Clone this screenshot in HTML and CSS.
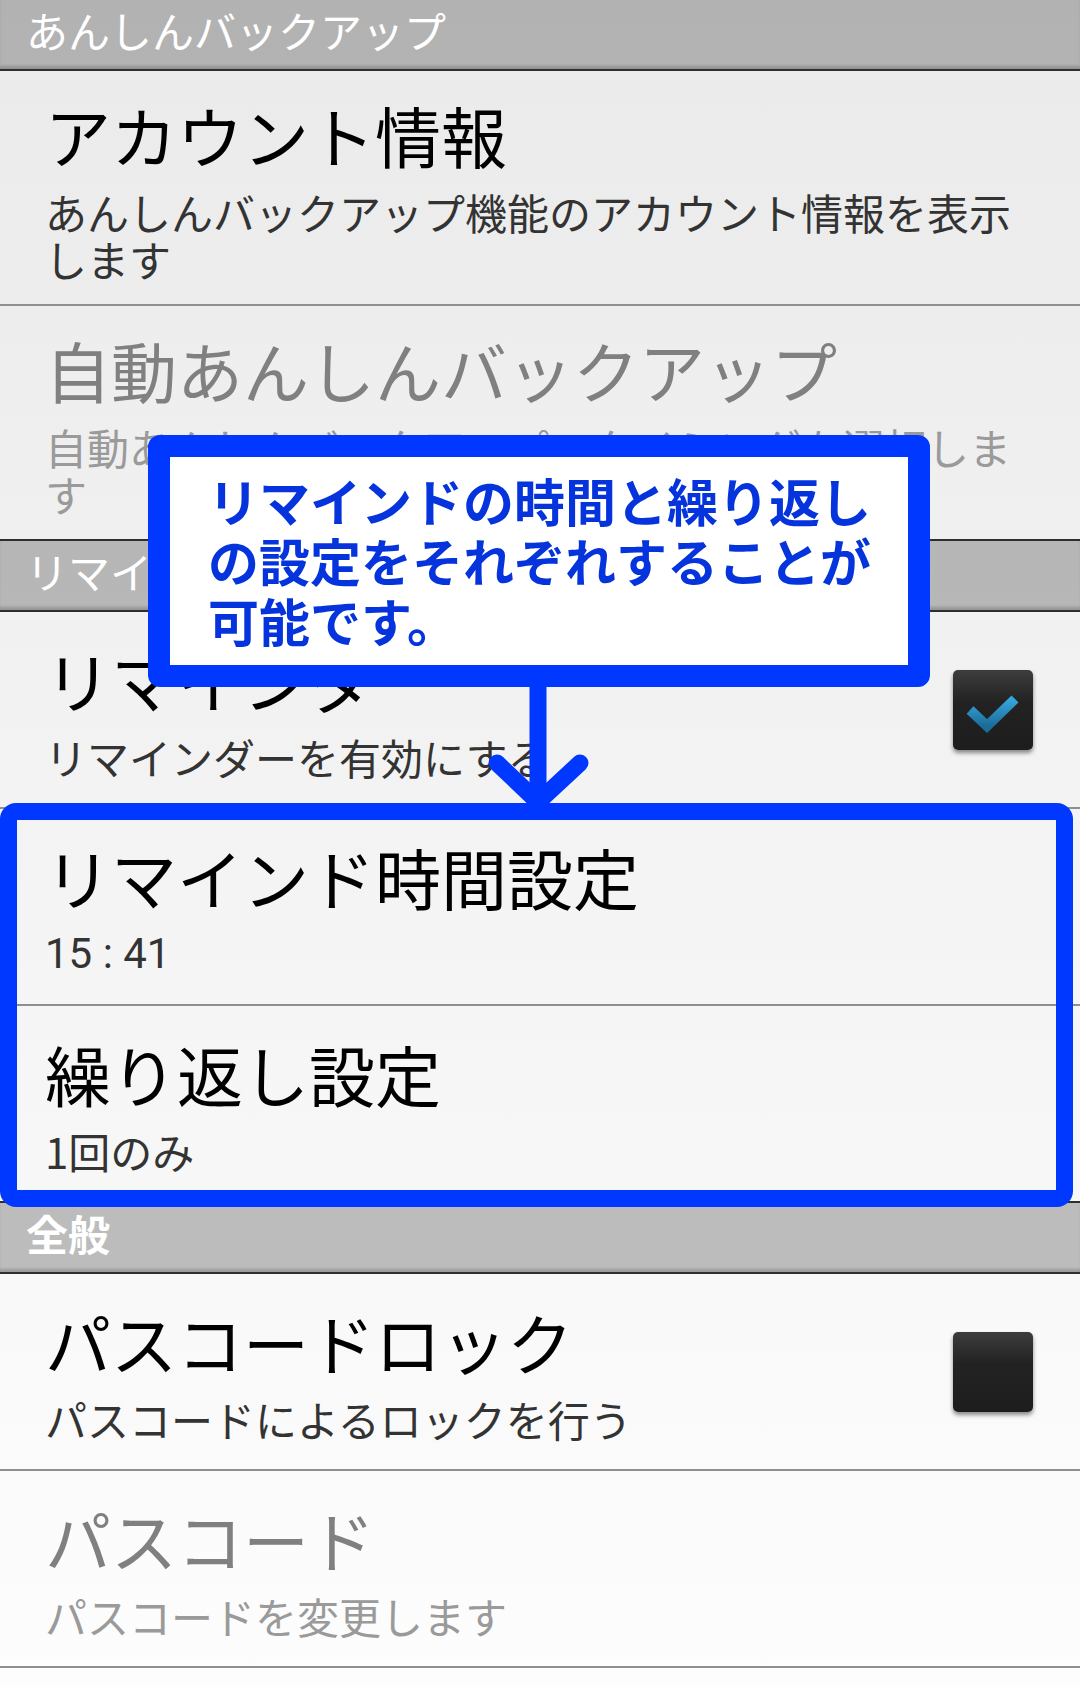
FILE: index.html
```html
<!DOCTYPE html>
<html lang="ja">
<head>
  <meta charset="UTF-8">
  <meta name="viewport" content="width=device-width, initial-scale=1">
  <title>設定</title>
  <link rel="stylesheet" href="styles.css">
</head>
<body>

  <div class="screen">

    <div class="category">あんしんバックアップ</div>

    <div class="pref pref--tall">
      <div class="pref__text">
        <div class="pref__title">アカウント情報</div>
        <div class="pref__summary">あんしんバックアップ機能のアカウント情報を表示します</div>
      </div>
    </div>

    <div class="pref pref--tall pref--disabled">
      <div class="pref__text">
        <div class="pref__title">自動あんしんバックアップ</div>
        <div class="pref__summary">自動あんしんバックアップのタイミングを選択します</div>
      </div>
    </div>

    <div class="category">リマインダー</div>

    <div class="pref">
      <div class="pref__text">
        <div class="pref__title">リマインダー</div>
        <div class="pref__summary">リマインダーを有効にする</div>
      </div>
      <div class="checkbox checkbox--on">
        <svg viewBox="0 0 80 80" width="80" height="80">
          <defs>
            <linearGradient id="tick" x1="0" y1="0" x2="0" y2="1">
              <stop offset="0" stop-color="#35a7dc"/>
              <stop offset="1" stop-color="#1c6c98"/>
            </linearGradient>
          </defs>
          <polyline points="17,40 34,56 62,29" fill="none" stroke="url(#tick)" stroke-width="10"/>
        </svg>
      </div>
    </div>

    <div class="pref">
      <div class="pref__text">
        <div class="pref__title">リマインド時間設定</div>
        <div class="pref__summary pref__summary--num">15 : 41</div>
      </div>
    </div>

    <div class="pref">
      <div class="pref__text">
        <div class="pref__title">繰り返し設定</div>
        <div class="pref__summary">1回のみ</div>
      </div>
    </div>

    <div class="category category--bold">全般</div>

    <div class="pref">
      <div class="pref__text">
        <div class="pref__title">パスコードロック</div>
        <div class="pref__summary">パスコードによるロックを行う</div>
      </div>
      <div class="checkbox"></div>
    </div>

    <div class="pref pref--disabled">
      <div class="pref__text">
        <div class="pref__title">パスコード</div>
        <div class="pref__summary">パスコードを変更します</div>
      </div>
    </div>

    <!-- 注釈 -->
    <div class="highlight"></div>

    <div class="callout">リマインドの時間と繰り返し<br>の設定をそれぞれすることが<br>可能です。</div>

    <svg class="arrow" viewBox="0 0 120 135" width="120" height="135">
      <line x1="58" y1="0" x2="58" y2="118" stroke="#0038ff" stroke-width="17"/>
      <polyline points="17,83 58,122 100,83" fill="none" stroke="#0038ff" stroke-width="17" stroke-linecap="round" stroke-linejoin="round"/>
    </svg>

  </div>

</body>
</html>
```

FILE: styles.css
```css
* {
  box-sizing: border-box;
}

html, body {
  margin: 0;
  background-color: #fdfdfd;
}

body {
  font-family: "Noto Sans CJK JP", sans-serif;
}

.screen {
  position: relative;
  width: 1080px;
  min-height: 1687px;
  overflow: hidden;
  background: linear-gradient(#eaeaea, #fdfdfd);
}

/* カテゴリ見出し */
.category {
  margin-top: -2px;
  height: 73px;
  padding-left: 26px;
  border-top: 2px solid #2e2e2e;
  border-bottom: 2px solid #2e2e2e;
  background-color: rgba(0, 0, 0, 0.24);
  box-shadow: inset 0 -4px 3px -1px rgba(0, 0, 0, 0.18);
  color: #fff;
  font-size: 42px;
  line-height: 60px;
}

.category--bold {
  font-weight: 700;
}

/* 設定項目 */
.pref {
  display: flex;
  align-items: center;
  min-height: 197px;
  padding: 0 47px 0 45px;
  border-bottom: 2px solid #8f8f8f;
}

.pref--tall {
  min-height: 235px;
}

.pref__text {
  flex: 1;
  min-width: 0;
}

.pref__title {
  font-size: 66px;
  line-height: 80px;
  color: #000;
}

.pref__summary {
  margin-top: 14px;
  font-size: 42px;
  line-height: 47px;
  color: #333;
}

.pref__summary--num {
  font-family: Roboto, "Noto Sans CJK JP", sans-serif;
}

.pref--disabled .pref__title {
  color: #808080;
}

.pref--disabled .pref__summary {
  color: #9a9a9a;
}

.checkbox {
  flex: none;
  width: 80px;
  height: 80px;
  margin-left: 20px;
  border-radius: 5px;
  background: linear-gradient(#3d3d3d, #222 40%, #1d1d1d);
  box-shadow: 0 3px 4px rgba(0, 0, 0, 0.45);
}

.checkbox svg {
  display: block;
}

/* 注釈の枠と吹き出し */
.highlight {
  position: absolute;
  left: 0;
  top: 803px;
  width: 1073px;
  height: 404px;
  border: 17px solid #0038ff;
  border-radius: 16px;
}

.callout {
  position: absolute;
  left: 148px;
  top: 435px;
  width: 782px;
  height: 252px;
  padding: 13px 0 0 38px;
  border: 22px solid #0038ff;
  border-radius: 12px;
  background-color: #fff;
  color: #0534dc;
  font-size: 51px;
  font-weight: 700;
  line-height: 60px;
}

.arrow {
  position: absolute;
  left: 480px;
  top: 680px;
}
```
